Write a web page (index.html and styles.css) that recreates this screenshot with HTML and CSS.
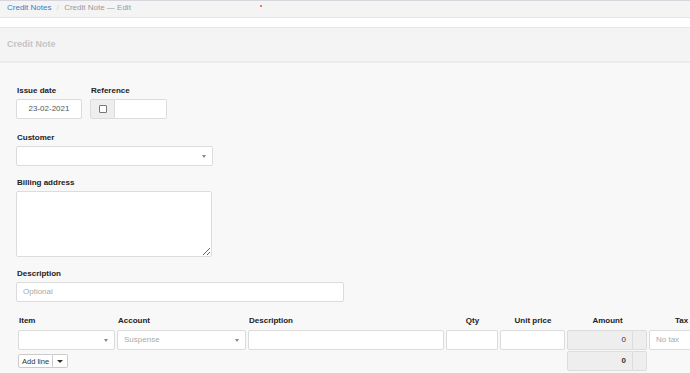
FILE: index.html
```html
<!DOCTYPE html>
<html lang="en">
<head>
  <meta charset="UTF-8" />
  <meta name="viewport" content="width=device-width, initial-scale=1" />
  <title>Credit Note - Edit</title>
  <link rel="stylesheet" href="styles.css">
</head>
<body>
  <div class="breadcrumb">
    <a href="#">Credit Notes</a>
    <span class="sep">/</span>
    <span class="current">Credit Note — Edit</span>
    <span class="dot"></span>
  </div>
  <div class="spacer"></div>

  <div class="panel-heading">Credit Note</div>

  <div class="form">
    <div class="row group first">
      <div>
        <label>Issue date</label>
        <div class="input date">23-02-2021</div>
      </div>
      <div>
        <label>Reference</label>
        <div class="input-group">
          <span class="addon"><span class="checkbox"></span></span>
          <div class="input ref"></div>
        </div>
      </div>
    </div>

    <div class="group">
      <label>Customer</label>
      <div class="input select customer"></div>
    </div>

    <div class="group">
      <label>Billing address</label>
      <textarea class="textarea"></textarea>
    </div>

    <div class="group last">
      <label>Description</label>
      <div class="input description placeholder">Optional</div>
    </div>

    <div class="lines">
      <div class="th">Item</div>
      <div class="th">Account</div>
      <div class="th">Description</div>
      <div class="th center">Qty</div>
      <div class="th center">Unit price</div>
      <div class="th center">Amount</div>
      <div class="th center">Tax</div>

      <div class="input select"></div>
      <div class="input select placeholder">Suspense</div>
      <div class="input"></div>
      <div class="input"></div>
      <div class="input"></div>
      <div class="amount-group">
        <div class="input amount">0</div>
        <span class="addon end"></span>
      </div>
      <div class="input placeholder">No tax</div>

      <div class="add-cell">
        <div class="btn-group">
          <button type="button" class="btn">Add line</button>
          <button type="button" class="btn caret-btn"><span class="caret"></span></button>
        </div>
      </div>
      <div class="amount-group total-cell">
        <div class="input amount total">0</div>
        <span class="addon end"></span>
      </div>
    </div>
  </div>
</body>
</html>
```

FILE: styles.css
```css
* {
  margin: 0;
  padding: 0;
  box-sizing: border-box;
}
html, body {
  height: 100%;
}
body {
  font-family: 'Liberation Sans', Arial, sans-serif;
  font-size: 8px;
  color: #333;
  background: #f8f8f8;
  overflow: hidden;
}
.breadcrumb {
  height: 18px;
  background: #f4f4f4;
  border-top: 1px solid #d6d6dc;
  border-bottom: 1px solid #e4e4e4;
  padding: 2px 7px 0;
  line-height: 10px;
  color: #9a9a9a;
}
.breadcrumb a {
  color: #3a7bc8;
  text-decoration: none;
}
.breadcrumb .sep {
  color: #cfcfcf;
  margin: 0 3px;
}
.dot {
  display: inline-block;
  width: 2px;
  height: 2px;
  background: #f07a7a;
  margin-left: 127px;
  vertical-align: 3px;
}
.spacer {
  height: 10px;
  background: #fff;
  border-bottom: 1px solid #e6e6e6;
}
.panel-heading {
  height: 35px;
  background: #f4f4f4;
  border-bottom: 2px solid #ececec;
  padding: 0 7px;
  line-height: 33px;
  font-size: 9px;
  font-weight: bold;
  color: #c4c4c4;
}
.form {
  padding: 22px 16px 0;
}
.row {
  display: flex;
  gap: 8px;
}
.group {
  margin-bottom: 11px;
}
.group.first {
  margin-bottom: 13px;
}
.group.last {
  margin-bottom: 13px;
}
label, .th {
  display: block;
  font-weight: bold;
  color: #222;
  line-height: 10px;
  padding-top: 1px;
  margin-bottom: 3px;
  padding-left: 1px;
}
.input {
  height: 20px;
  background: #fff;
  border: 1px solid #dcdcdc;
  border-radius: 2px;
  line-height: 18px;
  padding: 0 6px;
  color: #555;
  position: relative;
  white-space: nowrap;
  overflow: hidden;
}
.placeholder {
  color: #aaa;
}
.date {
  width: 66px;
  text-align: center;
}
.input-group {
  display: flex;
}
.addon {
  display: flex;
  align-items: center;
  justify-content: center;
  width: 25px;
  height: 20px;
  background: #eee;
  border: 1px solid #dcdcdc;
  border-radius: 2px 0 0 2px;
}
.checkbox {
  width: 8px;
  height: 8px;
  border: 1px solid #777;
  border-radius: 1px;
  background: #fff;
}
.ref {
  width: 52px;
  border-left: none;
  border-radius: 0 2px 2px 0;
}
.customer {
  width: 197px;
}
.select::after {
  content: "";
  position: absolute;
  right: 6px;
  top: 8px;
  border-left: 2px solid transparent;
  border-right: 2px solid transparent;
  border-top: 3px solid #888;
}
.textarea {
  display: block;
  width: 196px;
  height: 66px;
  background: #fff;
  border: 1px solid #dcdcdc;
  border-radius: 2px;
  resize: vertical;
}
.description {
  width: 328px;
}
.lines {
  display: grid;
  grid-template-columns: 97px 129px 196px 52px 65px 80px 64px;
  column-gap: 2px;
  row-gap: 1px;
  margin-left: 2px;
}
.th.center {
  text-align: center;
}
.amount-group {
  display: flex;
}
.amount {
  width: 66px;
  text-align: right;
  background: #eee;
  color: #333;
  border-radius: 2px 0 0 2px;
}
.total {
  font-weight: bold;
}
.addon.end {
  width: 14px;
  border-left: none;
  border-radius: 0 2px 2px 0;
}
.add-cell {
  grid-column: 1 / 6;
  padding-top: 3px;
}
.total-cell {
  grid-column: 6;
}
.btn-group {
  display: flex;
}
.btn {
  height: 14px;
  padding: 0 3px;
  font-family: inherit;
  font-size: 7.5px;
  color: #333;
  background: #fff;
  border: 1px solid #ccc;
  border-radius: 2px 0 0 2px;
}
.caret-btn {
  width: 15px;
  border-left: none;
  border-radius: 0 2px 2px 0;
  display: flex;
  align-items: center;
  justify-content: center;
}
.caret {
  border-left: 3px solid transparent;
  border-right: 3px solid transparent;
  border-top: 3px solid #333;
}
```
